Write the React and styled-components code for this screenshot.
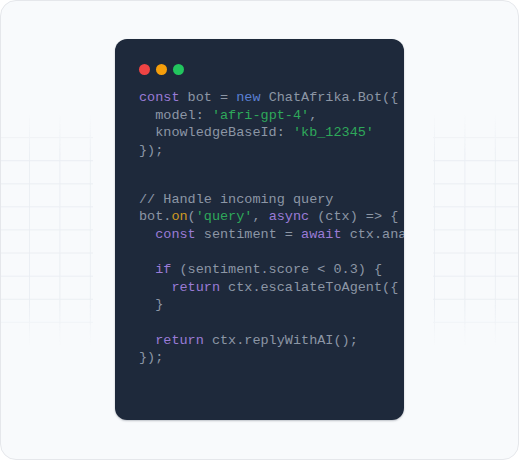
import React from 'react';
import styled, { createGlobalStyle } from 'styled-components';

const GlobalStyle = createGlobalStyle`
  html, body {
    margin: 0;
    padding: 0;
    background: #ffffff;
  }
  * {
    box-sizing: border-box;
  }
`;

const Frame = styled.div`
  width: 519px;
  height: 460px;
  border: 1px solid #e5e7eb;
  border-radius: 16px;
  background: #f8fafc;
  overflow: hidden;
  display: flex;
  align-items: flex-start;
  padding-top: 38px;
`;

const GridPanel = styled.div`
  flex: ${props => (props.$side === 'right' ? '1' : '0 0 92px')};
  height: 232px;
  margin-top: 75px;
  margin-left: ${props => (props.$side === 'right' ? '29px' : '0')};
  margin-right: ${props => (props.$side === 'left' ? '22px' : '0')};
  background-image:
    linear-gradient(to right, #e9edf2 1px, transparent 1px),
    linear-gradient(to bottom, #e9edf2 1px, transparent 1px);
  background-size: 30.4px 23.1px;
  background-position: ${props => (props.$side === 'right' ? '1px 0' : '28px 0')};
  -webkit-mask-image: linear-gradient(to bottom, transparent 0%, #000 18%, #000 82%, transparent 100%);
  mask-image: linear-gradient(to bottom, transparent 0%, #000 18%, #000 82%, transparent 100%);
  opacity: 0.9;
`;

const Card = styled.div`
  flex: 0 0 289px;
  height: 381px;
  background: #1e293b;
  border-radius: 12px;
  padding: 25px 24px 24px 24px;
  overflow: hidden;
  box-shadow: 0 1px 2px rgba(15, 23, 42, 0.25);
`;

const Dots = styled.div`
  display: flex;
  gap: 6px;
  margin-bottom: 14px;
`;

const Dot = styled.span`
  width: 11px;
  height: 11px;
  border-radius: 50%;
  background: ${props => props.$color};
`;

const CodeBlock = styled.div`
  font-family: 'Liberation Mono', 'Courier New', monospace;
  font-size: 13.5px;
  line-height: 17.6px;
  color: #8c96a5;
  white-space: pre;
  & + & {
    margin-top: 31.4px;
  }
`;

const Line = styled.div`
  height: 17.6px;
`;

const tokenColors = {
  kw: '#9a7bd6',
  new: '#5a80d4',
  str: '#2ea85a',
  fn: '#cf9a22',
  cmt: '#8c96a5',
};

const Tok = styled.span`
  color: ${props => tokenColors[props.$k] || 'inherit'};
`;

const setup = [
  [['kw', 'const'], ['', ' bot = '], ['new', 'new'], ['', ' ChatAfrika.Bot({']],
  [['', '  model: '], ['str', "'afri-gpt-4'"], ['', ',']],
  [['', '  knowledgeBaseId: '], ['str', "'kb_12345'"]],
  [['', '});']],
];

const handler = [
  [['cmt', '// Handle incoming query']],
  [['', 'bot.'], ['fn', 'on'], ['', '('], ['str', "'query'"], ['', ', '], ['kw', 'async'], ['', ' (ctx) => {']],
  [['', '  '], ['kw', 'const'], ['', ' sentiment = '], ['kw', 'await'], ['', ' ctx.analyzeSentiment(ctx.message);']],
  [],
  [['', '  '], ['kw', 'if'], ['', ' (sentiment.score < 0.3) {']],
  [['', '    '], ['kw', 'return'], ['', ' ctx.escalateToAgent({ priority: '], ['str', "'high'"], ['', ' });']],
  [['', '  }']],
  [],
  [['', '  '], ['kw', 'return'], ['', ' ctx.replyWithAI();']],
  [['', '});']],
];

const Code = ({ lines }) => (
  <CodeBlock>
    {lines.map((parts, i) => (
      <Line key={i}>
        {parts.map(([k, text], j) => (
          <Tok key={j} $k={k}>
            {text}
          </Tok>
        ))}
      </Line>
    ))}
  </CodeBlock>
);

export default function App() {
  return (
    <>
      <GlobalStyle />
      <Frame>
        <GridPanel $side="left" />
        <Card>
          <Dots>
            <Dot $color="#ef4444" />
            <Dot $color="#f59e0b" />
            <Dot $color="#22c55e" />
          </Dots>
          <Code lines={setup} />
          <Code lines={handler} />
        </Card>
        <GridPanel $side="right" />
      </Frame>
    </>
  );
}
